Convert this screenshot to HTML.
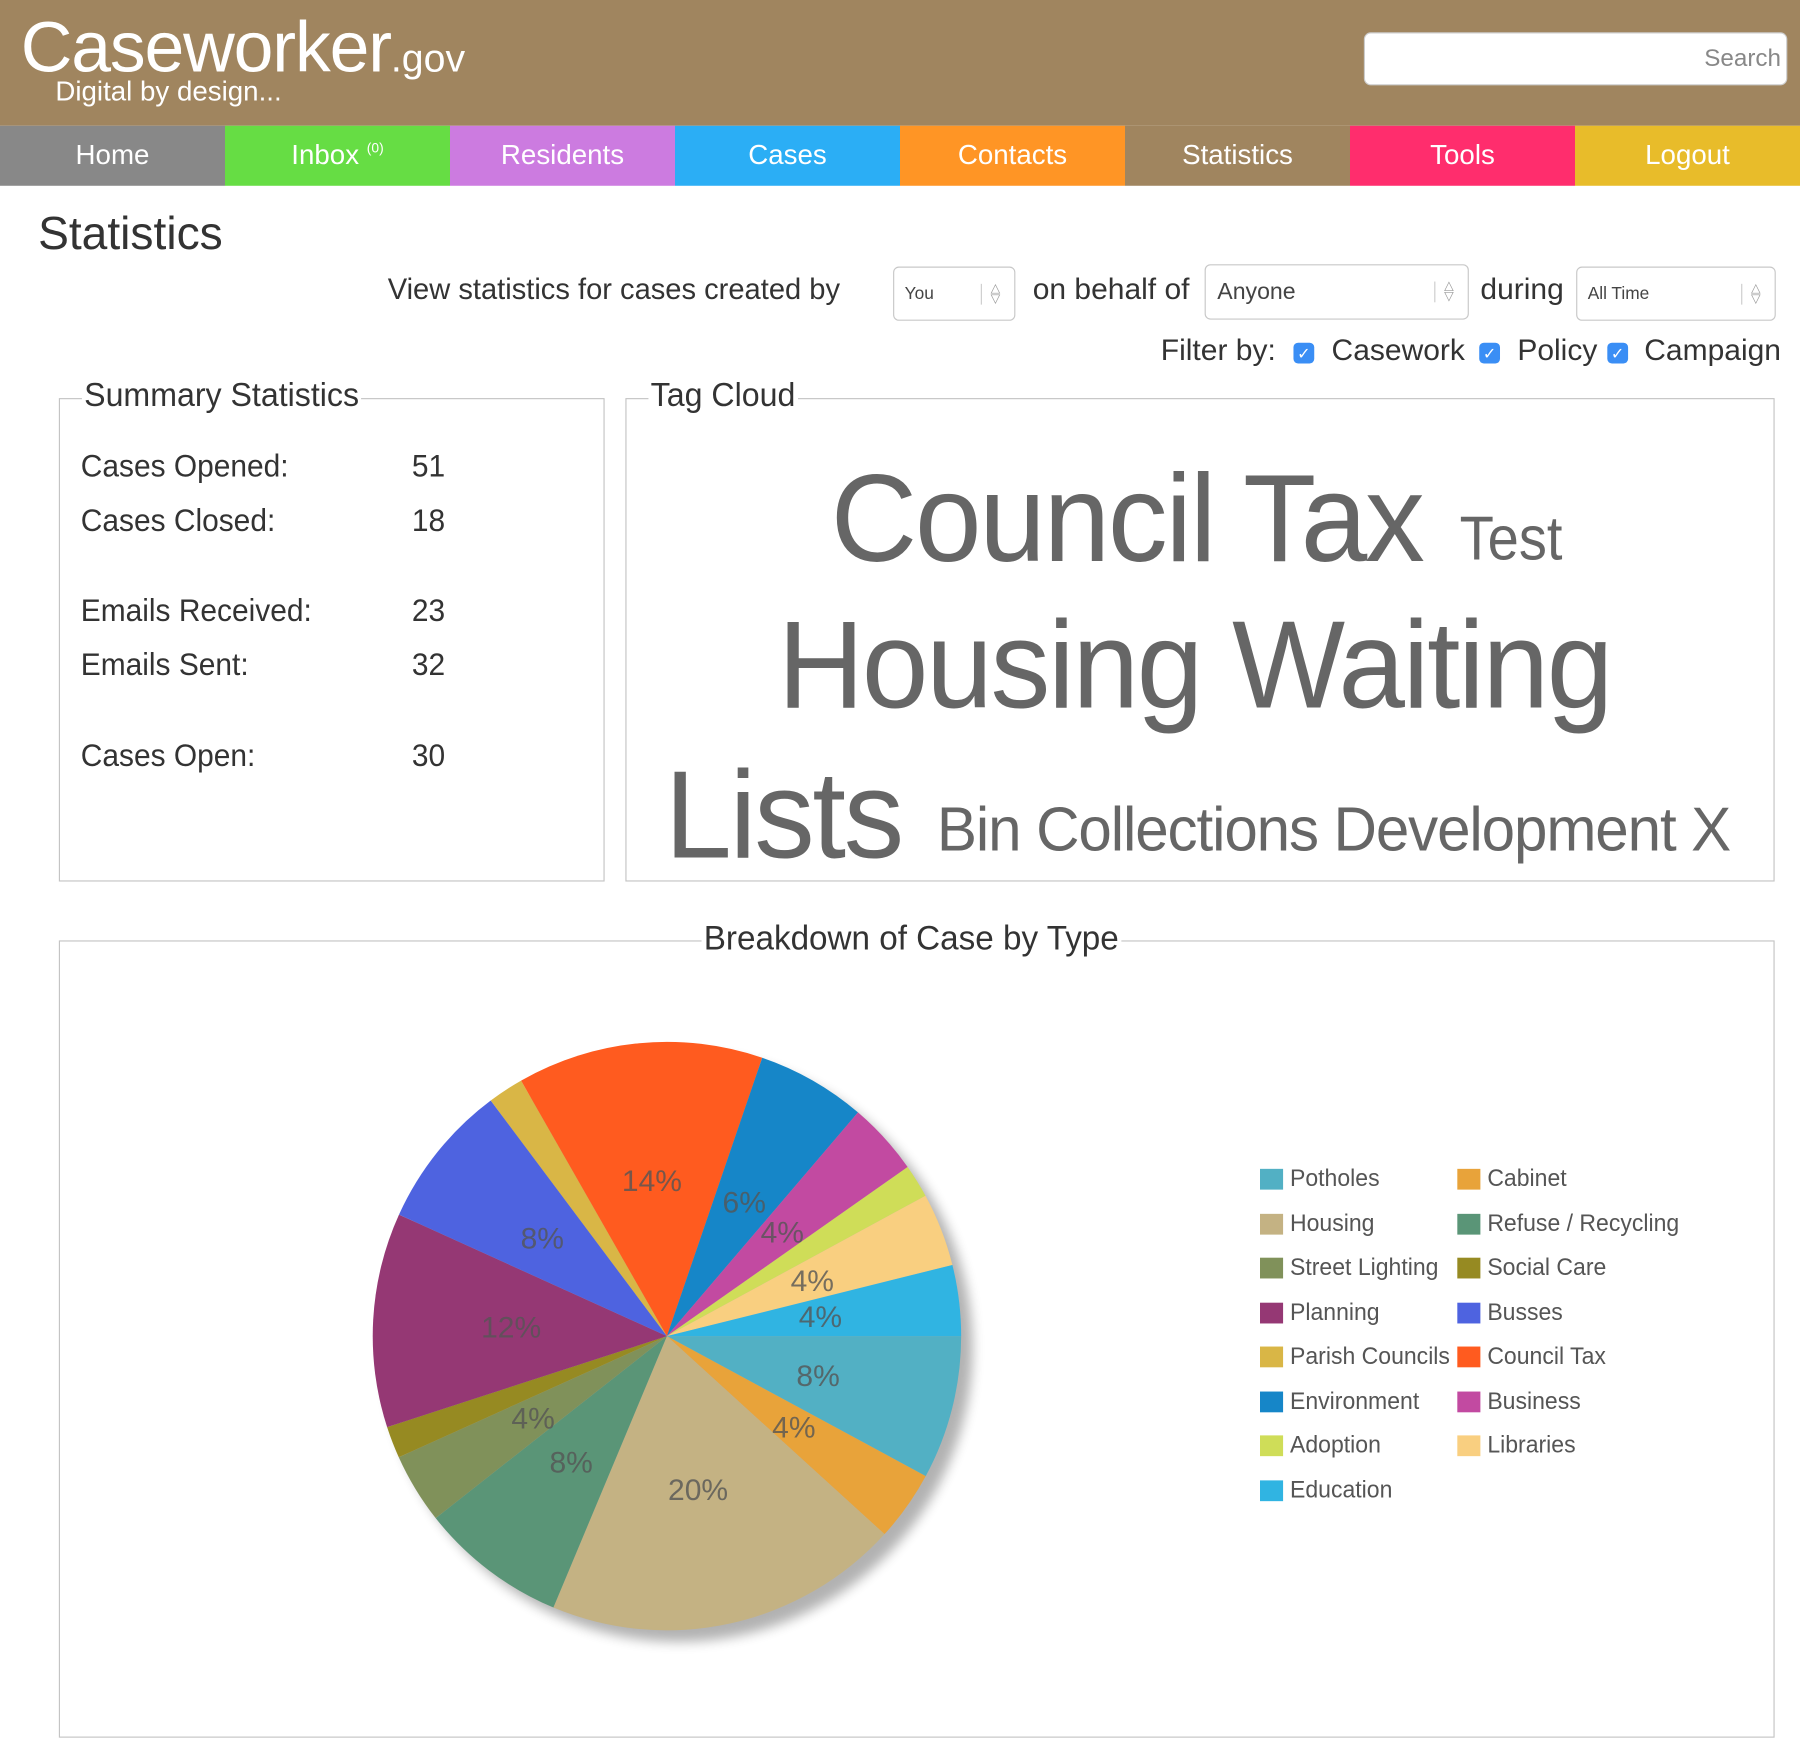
<!DOCTYPE html>
<html><head><meta charset="utf-8"><style>
html,body{margin:0;padding:0;width:1800px;height:1732px;overflow:hidden;background:#fff}
#w{position:absolute;left:0;top:0;width:1560px;height:1501px;transform:scale(1.15385);transform-origin:0 0;font-family:"Liberation Sans",Arial,sans-serif;color:#333}
.a{position:absolute;white-space:nowrap}
.hdr{position:absolute;left:0;top:0;width:1560px;height:109px;background:#A0855F}
.nav{position:absolute;top:109px;height:52px;width:195px;color:#fff;font-size:24px;text-align:center;line-height:52px}
.sel{position:absolute;border:1px solid #c8c8c8;border-radius:5px;background:#fff;font-size:17px;color:#444}
.sel .arr{position:absolute;right:12px;top:50%;transform:translateY(-50%);font-size:11px;color:#999;line-height:9px;text-align:center;border-left:1px solid #ccc;padding-left:8px}
.cb{position:absolute;width:18px;height:18px;background:#3a8ef5;border-radius:4px;color:#fff;font-size:14px;text-align:center;line-height:19px}
fieldset{position:absolute;border:1px solid #c4c4c4;margin:0;padding:0}
.lg{position:absolute;background:#fff;padding:0 2px;font-size:29px;color:#333;transform:scaleX(.96);transform-origin:0 0}
.row{position:absolute;font-size:27px;color:#333;transform:scaleX(.96);transform-origin:0 0}
.tag{position:absolute;color:#666;white-space:nowrap;transform-origin:0 0}
.li{position:absolute;font-size:21px;color:#555;transform:scaleX(.95);transform-origin:0 0;white-space:nowrap}
.sq{position:absolute;width:20px;height:18px}
</style></head><body><div id="w">
<div class="hdr"></div>
<div class="a" style="left:18px;top:6px;font-size:62px;color:#fff;letter-spacing:-1px">Caseworker<span style="font-size:34px;letter-spacing:0">.gov</span></div>
<div class="a" style="left:48px;top:66px;font-size:24px;color:#fff">Digital by design...</div>
<div class="a" style="left:1182px;top:28px;width:365px;height:44px;background:#fff;border:1px solid #ccc;border-radius:6px"></div>
<div class="a" style="left:1477px;top:39px;font-size:21px;color:#888">Search</div>
<div class="nav" style="left:0;background:#888">Home</div>
<div class="nav" style="left:195px;background:#66DD44">Inbox <span style="font-size:12px;position:relative;top:-10px">(0)</span></div>
<div class="nav" style="left:390px;background:#CC7BE0">Residents</div>
<div class="nav" style="left:585px;background:#2BAEF5">Cases</div>
<div class="nav" style="left:780px;background:#FF9525">Contacts</div>
<div class="nav" style="left:975px;background:#A0855F">Statistics</div>
<div class="nav" style="left:1170px;background:#FF2D6D">Tools</div>
<div class="nav" style="left:1365px;width:195px;background:#E8BC2A">Logout</div>
<div class="a" style="left:33px;top:181px;font-size:40px;color:#333">Statistics</div>
<div class="a" style="left:336px;top:235px;font-size:26px;transform:scaleX(.97);transform-origin:0 0">View statistics for cases created by</div>
<div class="sel" style="left:774px;top:231px;width:104px;height:45px"><span style="position:absolute;left:9px;top:14px;font-size:15px">You</span><span class="arr">△<br>▽</span></div>
<div class="a" style="left:895px;top:235px;font-size:26px">on behalf of</div>
<div class="sel" style="left:1044px;top:229px;width:227px;height:46px"><span style="position:absolute;left:10px;top:12px;font-size:20px">Anyone</span><span class="arr">△<br>▽</span></div>
<div class="a" style="left:1283px;top:235px;font-size:26px">during</div>
<div class="sel" style="left:1366px;top:231px;width:171px;height:45px"><span style="position:absolute;left:9px;top:14px;font-size:15px">All Time</span><span class="arr">△<br>▽</span></div>
<div class="a" style="left:1006px;top:288px;font-size:26px">Filter by:</div>
<div class="cb" style="left:1121px;top:297px">✓</div>
<div class="a" style="left:1154px;top:288px;font-size:26px">Casework</div>
<div class="cb" style="left:1282px;top:297px">✓</div>
<div class="a" style="left:1315px;top:288px;font-size:26px">Policy</div>
<div class="cb" style="left:1393px;top:297px">✓</div>
<div class="a" style="left:1425px;top:288px;font-size:26px">Campaign</div>

<fieldset style="left:51px;top:345px;width:471px;height:417px"></fieldset>
<div class="lg" style="left:71px;top:327px">Summary Statistics</div>
<div class="row" style="left:70px;top:389px">Cases Opened:</div><div class="row" style="left:357px;top:389px">51</div>
<div class="row" style="left:70px;top:436px">Cases Closed:</div><div class="row" style="left:357px;top:436px">18</div>
<div class="row" style="left:70px;top:514px">Emails Received:</div><div class="row" style="left:357px;top:514px">23</div>
<div class="row" style="left:70px;top:561px">Emails Sent:</div><div class="row" style="left:357px;top:561px">32</div>
<div class="row" style="left:70px;top:640px">Cases Open:</div><div class="row" style="left:357px;top:640px">30</div>

<fieldset style="left:542px;top:345px;width:994px;height:417px"></fieldset>
<div class="lg" style="left:562px;top:327px">Tag Cloud</div>
<div class="tag" style="left:720px;top:386px;font-size:108px;letter-spacing:-2px;transform:scaleX(.96)">Council Tax</div>
<div class="tag" style="left:1265px;top:436px;font-size:54px;transform:scaleX(.9)">Test</div>
<div class="tag" style="left:674px;top:513px;font-size:108px;letter-spacing:-2px;transform:scaleX(.96)">Housing Waiting</div>
<div class="tag" style="left:576px;top:643px;font-size:108px;letter-spacing:-2px;transform:scaleX(.97)">Lists</div>
<div class="tag" style="left:812px;top:688px;font-size:54px;letter-spacing:-1px;transform:scaleX(.965)">Bin Collections Development X</div>

<fieldset style="left:51px;top:815px;width:1485px;height:689px"></fieldset>
<div class="lg" style="left:608px;top:797px;font-size:30px">Breakdown of Case by Type</div>

<svg class="a" style="left:0;top:0" width="1560" height="1501">
<defs><filter id="sh" x="-20%" y="-20%" width="140%" height="140%"><feGaussianBlur stdDeviation="5"/></filter></defs>
<circle cx="588" cy="1168" r="255" fill="#000" opacity="0.3" filter="url(#sh)"/>
<g stroke="none">
<path d="M578 1158L833 1158A255 255 0 0 1 802.3 1279.3Z" fill="#52B0C4"/>
<path d="M578 1158L802.3 1279.3A255 255 0 0 1 766.6 1329.6Z" fill="#E8A33A"/>
<path d="M578 1158L766.6 1329.6A255 255 0 0 1 479.6 1393.2Z" fill="#C4B283"/>
<path d="M578 1158L479.6 1393.2A255 255 0 0 1 377.6 1315.7Z" fill="#5A9577"/>
<path d="M578 1158L377.6 1315.7A255 255 0 0 1 345.6 1262.9Z" fill="#80915A"/>
<path d="M578 1158L345.6 1262.9A255 255 0 0 1 335.5 1236.8Z" fill="#968A22"/>
<path d="M578 1158L335.5 1236.8A255 255 0 0 1 345.8 1052.7Z" fill="#953874"/>
<path d="M578 1158L345.8 1052.7A255 255 0 0 1 425.3 953.8Z" fill="#4E63E0"/>
<path d="M578 1158L425.3 953.8A255 255 0 0 1 451.6 936.5Z" fill="#D9B646"/>
<path d="M578 1158L451.6 936.5A255 255 0 0 1 660.6 916.7Z" fill="#FF5B1F"/>
<path d="M578 1158L660.6 916.7A255 255 0 0 1 743.6 964.1Z" fill="#1686C8"/>
<path d="M578 1158L743.6 964.1A255 255 0 0 1 786.6 1011.4Z" fill="#C24AA1"/>
<path d="M578 1158L786.6 1011.4A255 255 0 0 1 802.1 1036.3Z" fill="#CFDD58"/>
<path d="M578 1158L802.1 1036.3A255 255 0 0 1 825.4 1096.3Z" fill="#F9CF80"/>
<path d="M578 1158L825.4 1096.3A255 255 0 0 1 833 1158Z" fill="#30B4E2"/>
</g>
<g font-family="Liberation Sans,Arial,sans-serif" font-size="26" fill="#555" fill-opacity="0.8" text-anchor="middle">
<text x="565" y="1032">14%</text><text x="645" y="1051">6%</text><text x="678" y="1077">4%</text>
<text x="470" y="1082">8%</text><text x="704" y="1119">4%</text><text x="711" y="1150">4%</text>
<text x="443" y="1159">12%</text><text x="709" y="1201">8%</text><text x="688" y="1246">4%</text>
<text x="462" y="1238">4%</text><text x="495" y="1276">8%</text><text x="605" y="1300">20%</text>
</g>
</svg>

<div class="sq" style="left:1092px;top:1013px;background:#52B0C4"></div><div class="li" style="left:1118px;top:1010px">Potholes</div>
<div class="sq" style="left:1263px;top:1013px;background:#E8A33A"></div><div class="li" style="left:1289px;top:1010px">Cabinet</div>
<div class="sq" style="left:1092px;top:1052px;background:#C4B283"></div><div class="li" style="left:1118px;top:1049px">Housing</div>
<div class="sq" style="left:1263px;top:1052px;background:#5A9577"></div><div class="li" style="left:1289px;top:1049px">Refuse / Recycling</div>
<div class="sq" style="left:1092px;top:1090px;background:#80915A"></div><div class="li" style="left:1118px;top:1087px">Street Lighting</div>
<div class="sq" style="left:1263px;top:1090px;background:#968A22"></div><div class="li" style="left:1289px;top:1087px">Social Care</div>
<div class="sq" style="left:1092px;top:1129px;background:#953874"></div><div class="li" style="left:1118px;top:1126px">Planning</div>
<div class="sq" style="left:1263px;top:1129px;background:#4E63E0"></div><div class="li" style="left:1289px;top:1126px">Busses</div>
<div class="sq" style="left:1092px;top:1167px;background:#D9B646"></div><div class="li" style="left:1118px;top:1164px">Parish Councils</div>
<div class="sq" style="left:1263px;top:1167px;background:#FF5B1F"></div><div class="li" style="left:1289px;top:1164px">Council Tax</div>
<div class="sq" style="left:1092px;top:1206px;background:#1686C8"></div><div class="li" style="left:1118px;top:1203px">Environment</div>
<div class="sq" style="left:1263px;top:1206px;background:#C24AA1"></div><div class="li" style="left:1289px;top:1203px">Business</div>
<div class="sq" style="left:1092px;top:1244px;background:#CFDD58"></div><div class="li" style="left:1118px;top:1241px">Adoption</div>
<div class="sq" style="left:1263px;top:1244px;background:#F9CF80"></div><div class="li" style="left:1289px;top:1241px">Libraries</div>
<div class="sq" style="left:1092px;top:1283px;background:#30B4E2"></div><div class="li" style="left:1118px;top:1280px">Education</div>
</div></body></html>
